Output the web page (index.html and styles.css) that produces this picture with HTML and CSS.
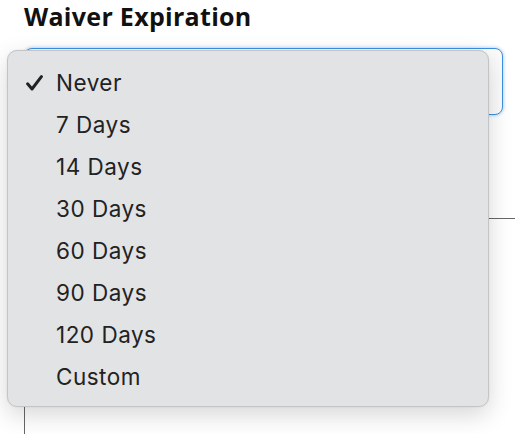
FILE: index.html
```html
<!DOCTYPE html>
<html>
<head>
<meta charset="utf-8">
<link rel="stylesheet" href="styles.css">
</head>
<body>
<div class="page">
  <h1 class="title">Waiver Expiration</h1>
  <div class="field">
    <div class="select"></div>
    <ul class="menu">
      <li class="item selected"><span class="check"><svg width="17" height="16" viewBox="0 0 17 16"><path d="M1.6 8.8 L6 14 L15.4 1.6" fill="none" stroke="#222" stroke-width="3" stroke-linecap="round" stroke-linejoin="round"/></svg></span>Never</li>
      <li class="item">7 Days</li>
      <li class="item">14 Days</li>
      <li class="item">30 Days</li>
      <li class="item">60 Days</li>
      <li class="item">90 Days</li>
      <li class="item">120 Days</li>
      <li class="item">Custom</li>
    </ul>
  </div>
  <div class="panel"></div>
</div>
</body>
</html>
```

FILE: styles.css
```css
html, body {
  margin: 0;
  padding: 0;
  background: #ffffff;
}
.page {
  position: relative;
  width: 515px;
  height: 434px;
  overflow: hidden;
  padding-left: 24px;
  box-sizing: border-box;
}
.title {
  margin: 0;
  padding-top: 1px;
  font-family: "Open Sans", sans-serif;
  font-weight: 700;
  font-size: 25px;
  line-height: 30px;
  color: #111;
  letter-spacing: 0.3px;
}
.field {
  margin-top: 17px;
}
.select {
  width: 479px;
  height: 67px;
  box-sizing: border-box;
  border: 1px solid #3b8fe0;
  border-radius: 8px;
  box-shadow: 0 0 3px 1px rgba(80, 150, 230, 0.35);
  background: #fbfbfb;
}
.menu {
  position: absolute;
  left: 7px;
  top: 50px;
  width: 482px;
  height: 357px;
  box-sizing: border-box;
  margin: 0;
  padding: 11px 0 0 0;
  list-style: none;
  background: #e2e3e5;
  border: 1px solid #c4c4c6;
  border-radius: 10px;
  box-shadow: 0 8px 24px rgba(0, 0, 0, 0.16), 0 0 2px rgba(0, 0, 0, 0.08);
  z-index: 2;
}
.item {
  position: relative;
  height: 42px;
  line-height: 42px;
  padding-left: 48px;
  font-family: "Inter", "Liberation Sans", sans-serif;
  font-size: 22.5px;
  color: #222;
  letter-spacing: 0.5px;
}
.check {
  position: absolute;
  left: 18px;
  top: 13px;
  line-height: 0;
}
.panel {
  margin-top: 103px;
  height: 300px;
  border-top: 1px solid #666;
  border-left: 1px solid #666;
}
```
